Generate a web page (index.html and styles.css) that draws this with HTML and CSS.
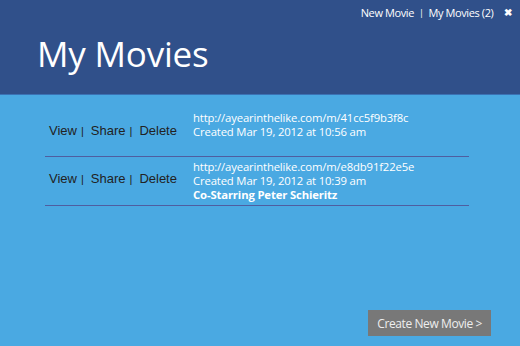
FILE: index.html
```html
<!DOCTYPE html>
<html lang="en">
<head>
    <meta charset="UTF-8">
    <title>My Movies</title>
    <link rel="stylesheet" href="styles.css">
</head>
<body>

    <header class="header">
        <nav class="topnav">
            <a href="#">New Movie</a>
            <span class="sep">|</span>
            <a href="#">My Movies (2)</a>
            <span class="close">&#10006;</span>
        </nav>
        <h1>My Movies</h1>
    </header>

    <main class="content">
        <div class="movie">
            <div class="actions">
                <a href="#">View</a><span class="bar">|</span><a href="#">Share</a><span class="bar">|</span><a href="#">Delete</a>
            </div>
            <div class="info">
                <div>http://ayearinthelike.com/m/41cc5f9b3f8c</div>
                <div>Created Mar 19, 2012 at 10:56 am</div>
            </div>
        </div>
        <div class="movie">
            <div class="actions">
                <a href="#">View</a><span class="bar">|</span><a href="#">Share</a><span class="bar">|</span><a href="#">Delete</a>
            </div>
            <div class="info">
                <div>http://ayearinthelike.com/m/e8db91f22e5e</div>
                <div>Created Mar 19, 2012 at 10:39 am</div>
                <div class="costar">Co-Starring Peter Schieritz</div>
            </div>
        </div>

        <div class="footer">
            <button class="create">Create New Movie &gt;</button>
        </div>
    </main>

</body>
</html>
```

FILE: styles.css
```css
/* Estilos gerais */
html, body {
    margin: 0;
    padding: 0;
    height: 100%;
}

body {
    font-family: "Open Sans", sans-serif;
    background-color: #4aa9e2;
    display: flex;
    flex-direction: column;
}

.header {
    background-color: #30508a;
    height: 95px;
    box-sizing: border-box;
    border-bottom: 1px solid #3b72b4;
    color: white;
}

.topnav {
    display: flex;
    justify-content: flex-end;
    align-items: center;
    padding: 3px 8px 0 0;
    font-size: 11px;
    letter-spacing: -0.4px;
    height: 18px;
}

.topnav a {
    color: white;
    text-decoration: none;
}

.topnav .sep {
    margin: 0 5px;
    font-size: 9px;
}

.topnav .close {
    margin-left: 11px;
    font-size: 10px;
    font-weight: bold;
}

h1 {
    margin: 0;
    padding: 9px 0 0 37px;
    font-size: 35px;
    font-weight: normal;
    letter-spacing: -0.2px;
}

.content {
    flex: 1;
    display: flex;
    flex-direction: column;
    padding: 14px 51px 0 45px;
}

.movie {
    display: flex;
    align-items: flex-start;
    border-bottom: 1px solid #4f5ea0;
    height: 48px;
    box-sizing: border-box;
    padding-top: 2px;
}

.movie + .movie {
    height: 49px;
    padding-top: 3px;
}

.actions {
    width: 144px;
    padding: 12px 0 0 4px;
    line-height: 16px;
    font-family: "Liberation Sans", Arial, sans-serif;
    font-size: 13px;
    color: #222;
}

.movie + .movie .actions {
    padding-top: 11px;
}

.actions a {
    color: #222;
    text-decoration: none;
}

.actions .bar {
    margin: 0 7px 0 4px;
    font-size: 11px;
}

.info {
    font-size: 11.3px;
    line-height: 14px;
    color: white;
    letter-spacing: -0.15px;
}

.costar {
    font-weight: bold;
}

.footer {
    margin-top: auto;
    display: flex;
    justify-content: flex-end;
    margin-right: -22px;
    margin-bottom: 10px;
}

.create {
    background-color: #787878;
    color: #eee;
    border: none;
    font-family: "Open Sans", sans-serif;
    font-size: 12px;
    letter-spacing: -0.4px;
    padding: 0 9px;
    height: 26px;
    white-space: nowrap;
    cursor: pointer;
}
```
